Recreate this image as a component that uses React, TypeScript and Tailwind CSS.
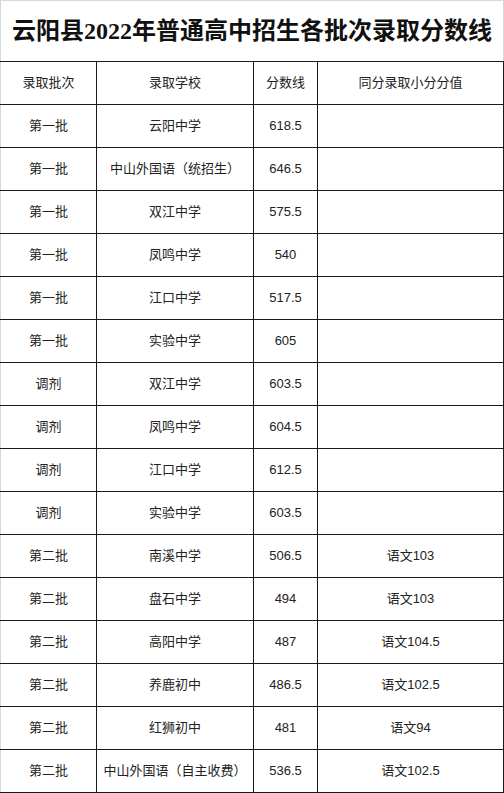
const rows: [string, string, string, string][] = [
  ["第一批", "云阳中学", "618.5", ""],
  ["第一批", "中山外国语（统招生）", "646.5", ""],
  ["第一批", "双江中学", "575.5", ""],
  ["第一批", "凤鸣中学", "540", ""],
  ["第一批", "江口中学", "517.5", ""],
  ["第一批", "实验中学", "605", ""],
  ["调剂", "双江中学", "603.5", ""],
  ["调剂", "凤鸣中学", "604.5", ""],
  ["调剂", "江口中学", "612.5", ""],
  ["调剂", "实验中学", "603.5", ""],
  ["第二批", "南溪中学", "506.5", "语文103"],
  ["第二批", "盘石中学", "494", "语文103"],
  ["第二批", "高阳中学", "487", "语文104.5"],
  ["第二批", "养鹿初中", "486.5", "语文102.5"],
  ["第二批", "红狮初中", "481", "语文94"],
  ["第二批", "中山外国语（自主收费）", "536.5", "语文102.5"],
];

const Row = ({ cells, first = false }: { cells: string[]; first?: boolean }) => (
  <div
    className={`flex border-b border-[#1a1a1a] ${first ? "h-[44px] border-t" : "h-[43px]"}`}
  >
    <div className="flex w-[97px] items-center justify-center border-l border-r border-l-[#d8d8d8] border-r-[#1a1a1a]">
      {cells[0]}
    </div>
    <div className="flex w-[157px] items-center justify-center border-r border-[#1a1a1a]">
      {cells[1]}
    </div>
    <div className="flex w-[64px] items-center justify-center border-r border-[#1a1a1a]">
      {cells[2]}
    </div>
    <div className="flex w-[186px] items-center justify-center border-r border-[#1a1a1a]">
      {cells[3]}
    </div>
  </div>
);

export default function App() {
  return (
    <main className="h-[793px] w-[504px] overflow-hidden bg-white">
      <div className="flex h-[61px] items-center justify-center border-x border-t border-[#d8d8d8]">
        <h1 className="text-[24px] font-bold leading-none text-[#111] [font-family:'Liberation_Serif','Noto_Sans_CJK_SC',serif]">
          云阳县2022年普通高中招生各批次录取分数线
        </h1>
      </div>
      <div className="text-[13px] text-[#222] [font-family:'Liberation_Sans','Noto_Sans_CJK_SC',sans-serif]">
        <Row first cells={["录取批次", "录取学校", "分数线", "同分录取小分分值"]} />
        {rows.map((r, i) => (
          <Row key={i} cells={r} />
        ))}
      </div>
    </main>
  );
}
